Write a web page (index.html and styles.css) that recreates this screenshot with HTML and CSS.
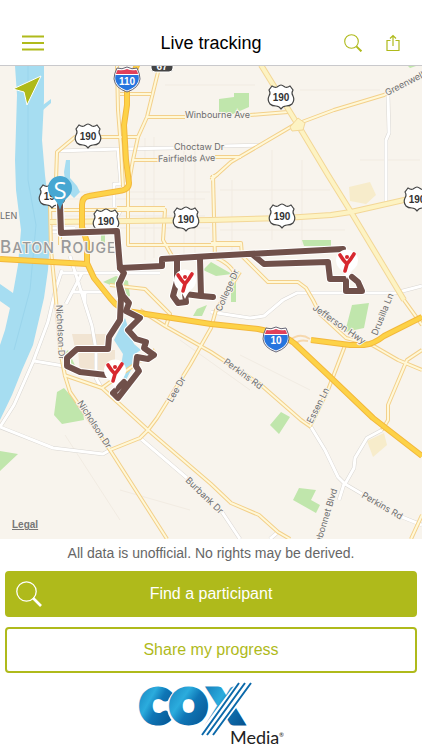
FILE: index.html
```html
<!DOCTYPE html>
<html lang="en">
<head>
  <meta charset="utf-8">
  <meta name="viewport" content="width=device-width, initial-scale=1">
  <title>Live tracking</title>
  <link rel="stylesheet" href="styles.css">
</head>
<body>
  <header class="topbar">
    <button class="icon-btn" aria-label="Menu">
      <svg width="22" height="16" viewBox="0 0 22 16"><path d="M0 1.5h22M0 8h22M0 14.5h22" stroke-width="2"/></svg>
    </button>
    <h1>Live tracking</h1>
    <div class="actions">
      <button class="icon-btn" aria-label="Search">
        <svg width="18" height="18" viewBox="0 0 18 18"><circle cx="7.5" cy="7.5" r="6.8" stroke-width="1.1"/><path d="M12.4 12.4l5 5" stroke-width="2"/></svg>
      </button>
      <button class="icon-btn" aria-label="Share">
        <svg width="14" height="18" viewBox="0 0 14 18"><path d="M4.5 6.5H1v10h12v-10H9.500M7 12V2M4 4.500L7 1.500l3 3" stroke-width="1.200"/></svg>
      </button>
    </div>
  </header>

  <main class="map">
    <svg class="map-canvas" viewBox="0 66 422 473" preserveAspectRatio="xMidYMid slice" role="img" aria-label="Map of Baton Rouge">
      <defs>
        <g id="us-shield">
          <path d="M-9-11q3 2 5 1q3-2 4-2q1 0 4 2q2 1 5-1l3 4q-2 3 0 6q2 4-1 8q-2 2-6 2q-3 0-5 3q-2-3-5-3q-4 0-6-2q-3-4-1-8q2-3 0-6z" fill="#fff" stroke="#444" stroke-width="1.200"/>
          <text class="shield-text" y="4">190</text>
        </g>
        <g id="interstate">
          <path d="M-10-11q5 2 10-1q5 3 10 1q3 6 3 11q-1 9-13 13q-12-4-13-13q0-5 3-11z" fill="#fff" stroke="#667" stroke-width="1"/>
          <path d="M-11-5q1-4 2-4q5 1 9-1q4 2 9 1q1 0 2 4z" fill="#e0405a"/>
          <path d="M-11.500-4h23q2 11-11.500 15.500q-13.500-4.500-11.500-15.500z" fill="#2675de"/>
        </g>
        <g id="pin">
          <path d="M0 15q-3-7-8-11a11 11 0 1 1 16 0q-5 4-8 11z" fill="#fff"/>
          <path d="M-7-9q3 5 7 9M7-10q-3 5-7 10l-2 7" fill="none" stroke="#d7282f" stroke-width="3.600" stroke-linecap="round" stroke-linejoin="round"/>
          <circle cy="-7" r="2" fill="#d7282f"/>
        </g>
        <!-- road geometry, drawn twice: casing first, then fill -->
        <g id="minor-roads">
          <path d="M57 151L120 149L175 148M222 146L262 145M388 95L389 133L386 140V205M211 312L230 315L250 318L264 316L283 300L297 293H395L422 286"/>
          <path d="M0 427L14 405L33 362L48 322L56 288L62 270M34 361L64 366M0 427L53 448L103 454L110 450M140 438L187 478M222 512L240 539"/>
          <path d="M311 427L325 450L338 477L345 484L362 494M402 517L422 525M345 484L354 468L355 458L367 438L382 430M278 532L270 539M344 484L339 500"/>
          <path d="M62 273H160M70 256L92 326L96 350V378L102 389M72 292H104M82 273L66 304M122 208L114 222M127 175V184H114V207M50 232H75M50 228H75M85 304V292"/>
          <path d="M118 150L121 185"/>
        </g>
        <g id="main-roads">
          <path d="M117 66L118 110L121 148L123 187M158 72L147 117L138 137L133 160L129 182M120 94H151M147 117H185M133 160H158M100 137H138M100 137H75L57 152L56 180L50 205L51 250L56 300L60 350L65 376L70 392L110 450L167 539"/>
          <path d="M261 65L298 125L328 175L351 212L404 300L422 325M128 180L128 245H240M50 210H165L163 240L172 256M213 175L215 260M211 180L231 162L294 125L334 110L384 95L422 74M250 115L288 112M215 157H241"/>
          <path d="M211 243H241L242 256L268 282H298L306 288L313 300L320 314L346 338L372 345L398 360L422 370M346 343L328 390L310 426M422 350L407 360L388 405V420L382 430"/>
          <path d="M64 375L102 388L148 430L211 484L231 503L259 515L278 532L290 539M148 430L157 418L190 365L211 328L216 310L240 272M148 430L140 438L110 450M140 310L165 326L211 352L261 385L301 420L311 427"/>
          <path d="M110 285L145 289L170 314L166 326M422 515L411 539M102 388L155 350M211 178L218 174M60 190V245M211 256Q230 262 236 276M117 208H165"/>
        </g>
        <g id="us-road">
          <path d="M50 222L130 221L211 220L285 218L331 215L351 212L422 196"/>
          <path d="M261 65L298 125L328 175L351 212L404 300"/>
        </g>
        <g id="highways">
          <path d="M138 63L127 88V105L124 125L126 160L129 183Q129 190 119 191L89 196Q82 197 82 205V227L87 242V263L94 278L110 298Q119 310 133 312L211 324L258 329Q283 334 294 343L328 375L373 418L422 456"/>
          <path d="M0 259L87 264M311 340L350 345H364Q374 344 384 336L422 317"/>
        </g>
        <g id="route">
          <path d="M60 205L61 233L117 231L120 268L162 266V259L211 256L343 249M252 254L264 264L328 262L330 279H345M346 281V291H362L358 282L352 277"/>
          <path d="M200 259L201 296L213 297M177 261V281L173 296L178 303L186 302L185 294L201 296"/>
          <path d="M120 268L124 273L119 284L121 298L120 320L109 337L108 349H77L67 358V366L80 372L106 375"/>
          <path d="M119 284L123 296L129 303L126 311L140 318L128 330L136 339L146 342L144 348L154 355L148 359L137 357L136 366L139 371L118 398L113 393L124 382"/>
        </g>
      </defs>

      <rect y="66" width="422" height="473" fill="#f8f4ed"/>

      <!-- built-up areas -->
      <g fill="#f1e4d2">
        <path d="M72 334H108V348H75zM78 350H115V374H80z"/>
        <path d="M349 187L370 182L376 195L366 204L350 201zM367 441L384 433L387 445L373 457z" fill="#f7eccb"/>
      </g>
      <g stroke="#f1ebe2" stroke-width="1" fill="none">
        <path d="M62 192H210M68 199H205M65 216H205M62 228H210M145 138V260M154 137V258M184 140V256M195 140V256M232 180V250M272 150V240M302 160V245"/>
        <path d="M220 190H330M220 230H345M165 85H255M300 90H380M360 160H420M65 435L120 520M120 490L190 510M240 355L310 390M180 340L250 390"/>
      </g>

      <!-- water -->
      <g fill="#a6ddf1">
        <path d="M15 66H44V100L42 140L45 175L49 210L50 240L48 270L44 298L33 345L22 370L12 395L0 420V345L5 330L10 308L0 301V284L13 293L18 265L21 230L16 190L15 160L17 95z"/>
        <path d="M43 105L51 99V103L43 110zM66 160H70V178L77 186L80 192L74 198L66 190L64 172zM125 318L129 330L134 344L141 350L133 355L132 368L125 382L121 366L123 354L114 340z"/>
      </g>
      <path d="M28 66V180L36 225L30 290L14 350" fill="none" stroke="#9ad5ec" stroke-width="1"/>

      <!-- parks -->
      <g fill="#c0e6ac">
        <path d="M219 99L234 97V93H249V107L233 114L219 112zM408 66H416L410 68zM302 240H331V246H304zM211 262L232 274L216 276L203 270zM231 276H236V302H231zM197 309L207 305L202 316H193z"/>
        <path d="M352 305L369 303L364 328L345 332zM103 282L116 276L128 281L130 296L122 299L118 288zM63 355L68 350L78 372L66 370zM57 392L64 388L83 410L84 420L62 424L54 415z"/>
        <path d="M0 451L18 454L0 471zM281 412L290 417L279 434L270 425zM299 488L316 490L311 500L320 505L316 513L293 500zM101 235H105V243H101z"/>
      </g>

      <use href="#minor-roads" class="road minor-casing"/>
      <use href="#minor-roads" class="road minor-fill"/>
      <use href="#main-roads" class="road main-casing"/>
      <use href="#main-roads" class="road main-fill"/>
      <use href="#us-road" class="road us-casing"/>
      <use href="#us-road" class="road us-fill"/>
      <path d="M290 127L298 118L305 123L303 130L292 131z" fill="#fdf3c3" stroke="#f3d797"/>
      <path d="M290 340Q300 332 310 339M296 346Q296 339 308 341" fill="none" stroke="#f6d8ae" stroke-width="2"/>
      <use href="#highways" class="road hwy-casing"/>
      <use href="#highways" class="road hwy-fill"/>

      <g class="labels">
        <text x="185" y="118">Winbourne Ave</text>
        <text x="174" y="150">Choctaw Dr</text>
        <text x="158" y="162" transform="rotate(-1 158 162)">Fairfields Ave</text>
        <text x="387" y="96" transform="rotate(-27 387 96)">Greenwell</text>
        <text x="221" y="312" transform="rotate(-66 221 312)">College Dr</text>
        <text x="56" y="305" transform="rotate(87 56 305)">Nicholson Dr</text>
        <text x="77" y="403" transform="rotate(57 77 403)">Nicholson Dr</text>
        <text x="172" y="403" transform="rotate(-60 172 403)">Lee Dr</text>
        <text x="223" y="363" transform="rotate(36 223 363)">Perkins Rd</text>
        <text x="185" y="481" transform="rotate(44 185 481)">Burbank Dr</text>
        <text x="312" y="309" transform="rotate(35 312 309)">Jefferson Hwy</text>
        <text x="377" y="336" transform="rotate(-68 377 336)">Drusilla Ln</text>
        <text x="312" y="424" transform="rotate(-63 312 424)">Essen Ln</text>
        <text x="317" y="556" transform="rotate(-73 317 556)">Bluebonnet Blvd</text>
        <text x="361" y="497" transform="rotate(30 361 497)">Perkins Rd</text>
        <text x="0" y="219">LEN</text>
        <text class="city" x="0" y="253">B<tspan class="small-cap">ATON</tspan> R<tspan class="small-cap">OUGE</tspan></text>
      </g>

      <rect x="151" y="56" width="22" height="16" rx="4" fill="#444" stroke="#fff"/>
      <text class="shield-text light" x="162" y="70">67</text>
      <use href="#us-shield" x="88" y="136"/>
      <use href="#us-shield" x="281" y="97"/>
      <use href="#us-shield" x="52" y="196"/>
      <use href="#us-shield" x="106" y="221"/>
      <use href="#us-shield" x="186" y="219"/>
      <use href="#us-shield" x="282" y="216"/>
      <use href="#us-shield" x="417" y="199"/>
      <use href="#interstate" x="127" y="79"/>
      <text class="shield-text light" x="127" y="85">110</text>
      <use href="#interstate" x="276" y="339"/>
      <text class="shield-text light" x="276" y="344">10</text>

      <use href="#route" class="road route-casing"/>
      <use href="#route" class="road route-fill"/>

      <use href="#pin" x="185" y="284"/>
      <use href="#pin" x="347" y="264"/>
      <use href="#pin" x="115" y="374"/>
      <path d="M60 210q-2-8-8-13a12 12 0 1 1 16 0q-6 5-8 13z" fill="#47a7d2"/>
      <text class="start-letter" x="60" y="199">S</text>
      <path d="M41 76L27 105L24 92L13 89z" fill="#afba1b" stroke="#fff" stroke-width="1"/>
    </svg>
    <a class="legal" href="#">Legal</a>
  </main>

  <footer class="panel">
    <p class="notice">All data is unofficial. No rights may be derived.</p>
    <button class="btn btn-solid">
      <svg class="btn-icon" width="26" height="26" viewBox="0 0 26 26"><circle cx="10.500" cy="10.500" r="9.700" stroke-width="1.300"/><path d="M17 17l8 8" stroke-width="2.600"/></svg>
      Find a participant
    </button>
    <button class="btn btn-outline">Share my progress</button>
    <a class="sponsor" href="#">
      <svg width="146" height="64" viewBox="138 682 146 64" role="img" aria-label="Cox Media">
        <defs>
          <linearGradient id="cox-blue" x1="0" y1="0" x2="1" y2="1">
            <stop offset="0" stop-color="#1681bd"/>
            <stop offset=".35" stop-color="#2bacdd"/>
            <stop offset=".55" stop-color="#0f76b6"/>
            <stop offset="1" stop-color="#07538f"/>
          </linearGradient>
        </defs>
        <g class="cox" fill="url(#cox-blue)" stroke="url(#cox-blue)">
          <text x="141" y="722">C</text>
          <circle cx="188" cy="707" r="21" fill="#fff" stroke="none"/>
          <text x="171" y="722">O</text>
          <text x="211" y="722">X</text>
        </g>
        <path d="M205 737L247 681" fill="none" stroke="#fff" stroke-width="15"/>
        <path d="M202 735L239 683M207 735L245 683M213 735L251 683" fill="none" stroke="#0b69aa" stroke-width="2"/>
        <text class="media" x="230" y="744">Media</text>
        <text class="reg" x="279" y="737">®</text>
      </svg>
    </a>
  </footer>
</body>
</html>
```

FILE: styles.css
```css
* { box-sizing: border-box; }
body { margin: 0; min-height: 100vh; display: flex; flex-direction: column; background: #fff; color: #000; font-family: "Liberation Sans", Arial, sans-serif; }
button { font-family: inherit; cursor: pointer; }

.topbar { height: 66px; padding: 20px 22px 0; display: grid; grid-template-columns: 1fr auto 1fr; align-items: center; border-bottom: 1px solid #c9c9cc; }
.topbar h1 { margin: 0; font-size: 18px; font-weight: normal; line-height: 22px; }
.actions { display: flex; justify-content: flex-end; align-items: center; gap: 24px; }
.icon-btn { display: flex; padding: 0; border: 0; background: none; justify-self: start; }
.icon-btn svg, .btn-icon { fill: none; stroke: #afba1b; }

.map { flex: 1; min-height: 300px; display: flex; position: relative; overflow: hidden; background: #f8f4ed; }
.map-canvas { flex: 1; width: 100%; height: auto; min-height: 0; }
.legal { position: absolute; left: 12px; bottom: 8px; font-size: 10px; line-height: 12px; font-weight: bold; color: #777; }

.road { fill: none; stroke-linejoin: round; }
.minor-casing { stroke: #d9d6d2; stroke-width: 4px; }
.minor-fill { stroke: #fff; stroke-width: 3px; }
.main-casing { stroke: #f3d08b; stroke-width: 4px; }
.main-fill { stroke: #fff8d8; stroke-width: 2px; }
.us-casing { stroke: #f3d797; stroke-width: 6px; }
.us-fill { stroke: #fdf3c3; stroke-width: 4px; }
.hwy-casing { stroke: #f3b83c; stroke-width: 6px; }
.hwy-fill { stroke: #fdd247; stroke-width: 4px; }
.route-casing { stroke: #fff; stroke-width: 8px; stroke-linecap: round; }
.route-fill { stroke: #70504a; stroke-width: 6px; stroke-linecap: round; }

.labels { font-family: Inter, sans-serif; font-size: 9px; fill: #6d6d6d; stroke: #f8f4ed; stroke-width: 2px; paint-order: stroke; }
.city { font-size: 17px; font-weight: 500; letter-spacing: 1px; fill: #999; }
.small-cap { font-size: 14px; }
.shield-text { font-family: "Liberation Sans", Arial, sans-serif; font-size: 10px; font-weight: bold; text-anchor: middle; fill: #333; }
.light { fill: #fff; }
.start-letter { font-family: "Open Sans", sans-serif; font-size: 24px; text-anchor: middle; fill: #fff; }

.panel { display: flex; flex-direction: column; padding: 0 5px 4px; }
.notice { margin: 0; padding: 5px 0 9px; font-size: 14px; line-height: 18px; text-align: center; color: #666; }
.btn { position: relative; height: 46px; border: 2px solid #afba1b; border-radius: 4px; font-size: 16px; }
.btn-solid { background: #afba1b; color: #fff; }
.btn-outline { margin-top: 10px; background: #fff; color: #afba1b; }
.btn-icon { position: absolute; left: 9px; top: 8px; stroke: #fff; }
.sponsor { display: flex; justify-content: center; margin-top: 9px; }
.cox { font-family: Lato, sans-serif; font-size: 43px; font-weight: 900; stroke-width: 7px; }
.media { font-family: Lato, sans-serif; font-size: 18px; fill: #222; }
.reg { font-family: Lato, sans-serif; font-size: 6px; fill: #222; }
```
